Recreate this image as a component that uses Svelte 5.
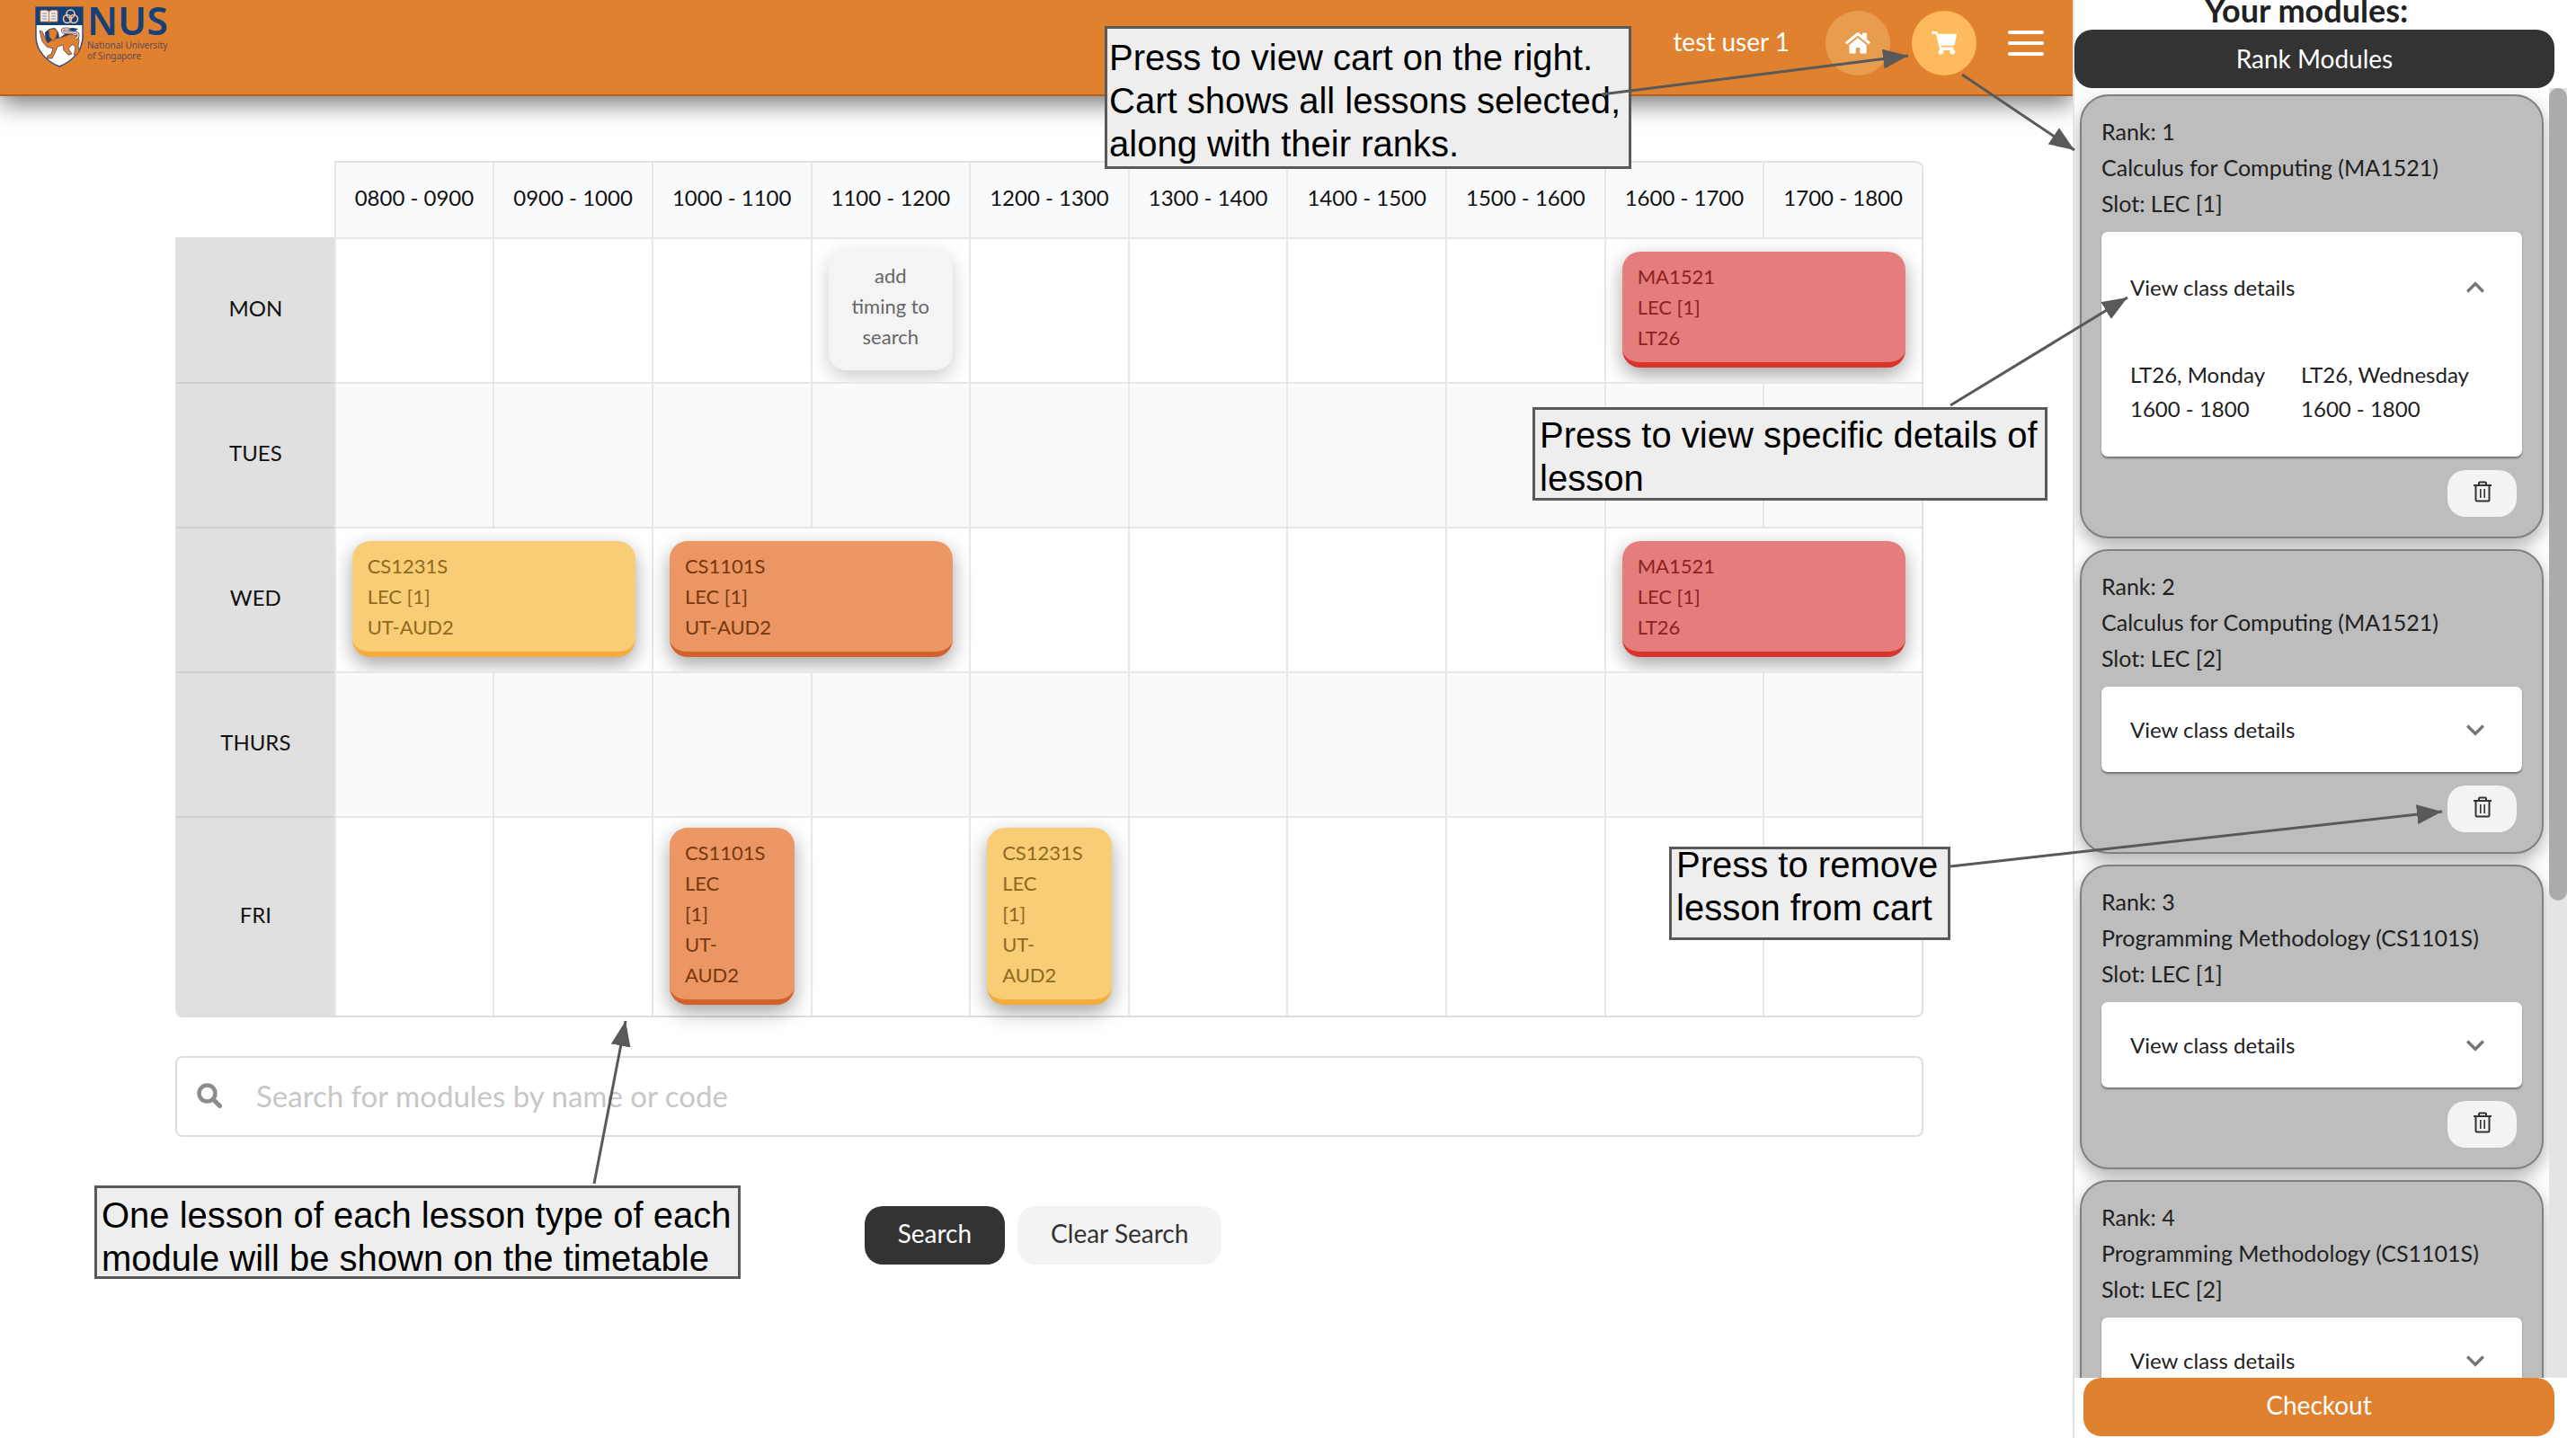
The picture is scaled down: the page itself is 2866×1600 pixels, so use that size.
<script>
  const hours = [
    '0800 - 0900', '0900 - 1000', '1000 - 1100', '1100 - 1200', '1200 - 1300',
    '1300 - 1400', '1400 - 1500', '1500 - 1600', '1600 - 1700', '1700 - 1800'
  ];

  const gap = (n) => Array.from({ length: n }, () => ({ span: 1 }));
  const lesson = (span, tone, ...lines) => ({ span, tone, lines });

  const days = [
    {
      name: 'MON',
      cells: [...gap(3), lesson(1, 'add', 'add', 'timing to', 'search'), ...gap(4), lesson(2, 'red', 'MA1521', 'LEC [1]', 'LT26')]
    },
    { name: 'TUES', cells: gap(10) },
    {
      name: 'WED',
      cells: [
        lesson(2, 'yellow', 'CS1231S', 'LEC [1]', 'UT-AUD2'),
        lesson(2, 'orange', 'CS1101S', 'LEC [1]', 'UT-AUD2'),
        ...gap(4),
        lesson(2, 'red', 'MA1521', 'LEC [1]', 'LT26')
      ]
    },
    { name: 'THURS', cells: gap(10) },
    {
      name: 'FRI',
      cells: [
        ...gap(2),
        lesson(1, 'orange', 'CS1101S', 'LEC', '[1]', 'UT-', 'AUD2'),
        ...gap(1),
        lesson(1, 'yellow', 'CS1231S', 'LEC', '[1]', 'UT-', 'AUD2'),
        ...gap(5)
      ]
    }
  ];

  let cart = $state([
    {
      rank: 1, title: 'Calculus for Computing (MA1521)', slot: 'LEC [1]', open: true,
      classes: [['LT26, Monday', '1600 - 1800'], ['LT26, Wednesday', '1600 - 1800']]
    },
    { rank: 2, title: 'Calculus for Computing (MA1521)', slot: 'LEC [2]', open: false, classes: [] },
    { rank: 3, title: 'Programming Methodology (CS1101S)', slot: 'LEC [1]', open: false, classes: [] },
    { rank: 4, title: 'Programming Methodology (CS1101S)', slot: 'LEC [2]', open: false, classes: [] }
  ]);

  let query = $state('');
</script>

<div class="page">
  <div class="workspace">
    <header>
      <a class="logo" href="#home" aria-label="National University of Singapore">
        <svg width="54" height="68" viewBox="0 0 54 68" aria-hidden="true">
          <path d="M1 1h52v33c0 16-13 28-26 33C14 62 1 50 1 34z" fill="#fff" stroke="#3a4d80" stroke-width="1.5" />
          <path d="M1 1h52v20H1z" fill="#16407a" />
          <path d="M6 5c4-1 7-1 9.500 1 2.500-2 6-2 9.500-1v12H6z" fill="#f3f1f1" stroke="#e0812f" stroke-width="1" />
          <path d="M8 8h5M8 11h5M8 14h5M18 8h5M18 11h5M18 14h5" stroke="#6d82ad" />
          <path d="M15.500 5v13" stroke="#e0812f" stroke-width="1.500" />
          <g fill="none" stroke="#f2c39a" stroke-width="1.600">
            <circle cx="39.500" cy="8.500" r="4.500" /><circle cx="36" cy="14" r="4.500" /><circle cx="43" cy="14" r="4.500" />
          </g>
          <path d="M11 29l5-4 6-1 4 5 1 6-3 5 2 3 7-4 4-6 6-1-8-2-5 3-3 3-2 9-5 2-8-6z" fill="#16407a" />
          <path d="M5 27l3 1 6 13 5-4 12-3 8-3 9 2 1 5-1 6 1 6-2 4h-4l1-3 1-5-3-4-3 3-2 2 2 3 2 3-4 1-5-5-1-6-6 2-3 7-3 6h-6l1-3 4-2 2-6-7-2-5-6z" fill="#e0812f" stroke="#5c4658" stroke-width=".8" />
          <path d="M15 26l7-1 3 4-2 6-3 4-4-5z" fill="#e0812f" stroke="#8a5138" />
          <path d="M45 36c3-1 4-4 2-6-4-3-10 1-15-1-3-2-1-4 2-4l9 1" fill="none" stroke="#5c4658" stroke-width="3.200" />
          <path d="M45 36c3-1 4-4 2-6-4-3-10 1-15-1-3-2-1-4 2-4l9 1" fill="none" stroke="#f7d7bd" stroke-width="1.600" />
          <path d="M37 26l5-2 6 1-4 3z" fill="#16407a" />
        </svg>
        <span class="logo-text">
          <strong>NUS</strong>
          <small>National University<br />of Singapore</small>
        </span>
      </a>
      <nav>
        <span class="user">test user 1</span>
        <button class="round home" aria-label="Home">
          <svg width="28" height="24" viewBox="0 0 28 24" fill="#fff" aria-hidden="true">
            <path d="M14 0a2 2 0 0 1 1.300.5L19 3.600V1.500a1 1 0 0 1 1-1h3a1 1 0 0 1 1 1v6.200l3.600 3a.8.8 0 0 1 .1 1.100l-1 1.200a.8.8 0 0 1-1.100.1L14.500 3.900a.8.8 0 0 0-1 0L2.400 13.100a.8.8 0 0 1-1.100-.1l-1-1.200a.8.8 0 0 1 .1-1.100L12.700.5A2 2 0 0 1 14 0z" />
            <path d="M14 6.300 23.600 14v8.500a1 1 0 0 1-1 1h-5.300a1 1 0 0 1-1-1v-4.700a.8.8 0 0 0-.8-.8h-3a.8.8 0 0 0-.8.8v4.700a1 1 0 0 1-1 1H5.400a1 1 0 0 1-1-1V14z" />
          </svg>
        </button>
        <button class="round cart" aria-label="Cart">
          <svg width="28" height="26" viewBox="0 0 28 26" fill="#fff" aria-hidden="true">
            <path d="M1 0h4.600c.6 0 1 .4 1.200 1l.4 1.800h19.500c.8 0 1.400.8 1.200 1.600l-2.300 10.400c-.1.600-.6 1-1.200 1H10.200l.3 1.600h13.100c.8 0 1.400.8 1.200 1.500l-.3 1.300a2.800 2.800 0 1 1-3.300.8H12.600a2.800 2.800 0 1 1-3.400-.6L5 2.800H1a1 1 0 0 1-1-1V1a1 1 0 0 1 1-1z" />
          </svg>
        </button>
        <button class="menu" aria-label="Menu"><i></i><i></i><i></i></button>
      </nav>
    </header>

    <main>
      <table>
        <thead>
          <tr>
            <td class="corner"></td>
            {#each hours as hour}<th scope="col">{hour}</th>{/each}
          </tr>
        </thead>
        <tbody>
          {#each days as day}
            <tr>
              <th scope="row">{day.name}</th>
              {#each day.cells as cell}
                <td colspan={cell.span}>
                  {#if cell.tone === 'add'}
                    <button class="lesson add">{#each cell.lines as line}<span>{line}</span>{/each}</button>
                  {:else if cell.lines}
                    <div class="lesson {cell.tone}">{#each cell.lines as line}<span>{line}</span>{/each}</div>
                  {/if}
                </td>
              {/each}
            </tr>
          {/each}
        </tbody>
      </table>

      <label class="search">
        <svg width="28" height="28" viewBox="0 0 28 28" fill="none" stroke="#8c8c8c" aria-hidden="true">
          <circle cx="11.500" cy="11.500" r="9" stroke-width="4.500" />
          <path d="M18.500 18.500l7 7" stroke-width="5" stroke-linecap="round" />
        </svg>
        <input type="text" placeholder="Search for modules by name or code" aria-label="Search for modules" bind:value={query} />
      </label>

      <div class="actions">
        <button class="btn dark">Search</button>
        <button class="btn light" onclick={() => (query = '')}>Clear Search</button>
      </div>
    </main>
  </div>

  <aside>
    <h2>Your modules:</h2>
    <button class="btn dark wide">Rank Modules</button>
    <div class="scroller">
      <div class="list">
        {#each cart as item}
          <article>
            <p>Rank: {item.rank}</p>
            <p>{item.title}</p>
            <p>Slot: {item.slot}</p>
            <section class="details" class:open={item.open}>
              <button class="summary" aria-expanded={item.open} onclick={() => (item.open = !item.open)}>
                View class details
                <svg width="40" height="40" viewBox="0 0 24 24" fill="#757575" aria-hidden="true">
                  {#if item.open}
                    <path d="M12 8l-6 6 1.410 1.410L12 10.830l4.590 4.580L18 14z" />
                  {:else}
                    <path d="M16.590 8.590L12 13.170 7.410 8.590 6 10l6 6 6-6z" />
                  {/if}
                </svg>
              </button>
              {#if item.open}
                <div class="classes">
                  {#each item.classes as [place, time]}<span>{place}<br />{time}</span>{/each}
                </div>
              {/if}
            </section>
            <button class="remove" aria-label="Remove lesson">
              <svg width="20" height="24" viewBox="0 0 20 24" fill="none" stroke="#333" stroke-width="2" aria-hidden="true">
                <path d="M0 5h20M6 4.500V2.500Q6 1.500 7 1.500h6q1 0 1 1v2M2.500 5v16q0 1.500 1.500 1.500h12q1.500 0 1.500-1.500V5" />
                <path d="M7.800 9v10M12.200 9v10" stroke-width="1.600" />
              </svg>
            </button>
          </article>
        {/each}
      </div>
      <div class="track"><div class="thumb"></div></div>
    </div>
    <button class="btn checkout">Checkout</button>
  </aside>

  <div class="note cart-note">Press to view cart on the right.<br />Cart shows all lessons selected,<br />along with their ranks.</div>
  <div class="note details-note">Press to view specific details of<br />lesson</div>
  <div class="note remove-note"><span>Press to remove<br />lesson from cart</span></div>
  <div class="note lesson-note">One lesson of each lesson type of each<br />module will be shown on the timetable</div>
  <svg class="arrows" width="2866" height="1600" viewBox="0 0 2866 1600" aria-hidden="true">
    <defs>
      <marker id="tip" viewBox="0 0 28 22" refX="28" refY="11" markerWidth="28" markerHeight="22" markerUnits="userSpaceOnUse" orient="auto">
        <path d="M0 0L28 11 0 22z" fill="#595959" />
      </marker>
    </defs>
    <g stroke="#595959" stroke-width="3">
      <path d="M1782 105L2123 62" marker-end="url(#tip)" />
      <path d="M2183 83L2308 167" marker-end="url(#tip)" />
      <path d="M2170 451L2367 331" marker-end="url(#tip)" />
      <path d="M2170 964L2717 903" marker-end="url(#tip)" />
      <path d="M661 1317L696 1136" marker-end="url(#tip)" />
    </g>
  </svg>
</div>

<style>
  :global(body) {
    margin: 0;
    background: #fff;
  }
  .page {
    position: relative;
    display: grid;
    grid-template-columns: minmax(0, 1fr) 550px;
    height: 100vh;
    box-sizing: border-box;
    padding-right: 10px;
    overflow: hidden;
    font-family: Lato, 'Open Sans', sans-serif;
    color: #212121;
  }
  button {
    font: inherit;
    color: inherit;
    border: 0;
    padding: 0;
    cursor: pointer;
  }
  header {
    display: flex;
    justify-content: space-between;
    align-items: flex-start;
    height: 105px;
    padding: 0 32px 0 39px;
    background: #e0812f;
    border-bottom: 2px solid #b0611f;
    box-shadow: 0 8px 26px rgba(0, 0, 0, 0.55);
  }
  .workspace {
    overflow: hidden;
  }
  .logo {
    display: flex;
    gap: 4px;
    padding-top: 7px;
    color: #16407a;
    text-decoration: none;
  }
  .logo-text {
    display: flex;
    flex-direction: column;
    font-family: 'Noto Sans', sans-serif;
  }
  .logo-text strong {
    font-size: 43px;
    font-weight: 600;
    line-height: 32px;
  }
  .logo-text small {
    margin-top: 5px;
    font-size: 10px;
    line-height: 12px;
    color: #5d4a56;
  }
  nav {
    display: flex;
    align-items: center;
    padding-top: 12px;
    color: #fff;
  }
  .user {
    margin-right: 40px;
    padding-bottom: 4px;
    font-size: 28px;
  }
  .round {
    display: flex;
    align-items: center;
    justify-content: center;
    width: 72px;
    height: 72px;
    margin-right: 24px;
    border-radius: 50%;
  }
  .home {
    background: #e79c4e;
  }
  .cart {
    margin-right: 35px;
    background: #ffba5d;
  }
  .menu {
    display: grid;
    gap: 8px;
    width: 40px;
    background: none;
  }
  .menu i {
    height: 4px;
    border-radius: 2px;
    background: #fff;
  }

  main {
    padding: 72px 166px 0 195px;
  }
  table {
    width: 100%;
    table-layout: fixed;
    border-collapse: separate;
    border-spacing: 0;
    border-right: 2px solid #e0e1e2;
    border-bottom: 2px solid #dcdddd;
    border-radius: 8px;
  }
  th,
  td {
    box-sizing: border-box;
    padding: 0;
    border-left: 2px solid #e6e7e7;
    font-size: 24px;
    font-weight: 400;
  }
  thead th {
    height: 85px;
    padding-bottom: 6px;
    background: #f9fafb;
    border-top: 2px solid #e0e1e2;
    color: #111;
  }
  thead th:last-child {
    border-top-right-radius: 8px;
  }
  .corner {
    border-color: transparent;
  }
  tbody td {
    height: 161px;
    padding: 10px 18px 12px;
    border-top: 2px solid #e6e7e7;
  }
  tbody tr:last-child td {
    height: 222px;
  }
  tbody th {
    padding-bottom: 6px;
    background: #e0e0e0;
    border-left-color: #e0e0e0;
    border-top: 2px solid #cfcfcf;
    color: #111;
  }
  tbody tr:first-child th {
    border-top-color: #e0e0e0;
  }
  tbody tr:last-child th {
    border-bottom-left-radius: 8px;
  }
  tbody tr:nth-child(even) td {
    background: #fafafa;
  }
  .lesson {
    display: flex;
    flex-direction: column;
    box-sizing: border-box;
    width: 100%;
    padding: 11px 17px 10px;
    border-bottom: 6px solid;
    border-radius: 20px;
    box-shadow: 0 8px 22px rgba(0, 0, 0, 0.36);
    font-size: 22px;
    line-height: 34px;
  }
  .lesson.red {
    background: #e47d7b;
    border-color: #d9342c;
  }
  .lesson.orange {
    background: #eb9663;
    border-color: #d2612b;
  }
  .lesson.yellow {
    background: #f8cd76;
    border-color: #f4ac3d;
  }
  .red span {
    color: #8c2322;
  }
  .orange span {
    color: #78380f;
  }
  .yellow span {
    color: #8f6a1e;
  }
  .lesson.add {
    align-items: center;
    padding: 13px 0 20px;
    border: 0;
    background: #f4f4f4;
    box-shadow: 0 8px 22px rgba(0, 0, 0, 0.2);
    color: #666;
  }

  .search {
    display: flex;
    align-items: center;
    gap: 38px;
    box-sizing: border-box;
    height: 90px;
    margin-top: 43px;
    padding: 0 24px 3px 22px;
    border: 2px solid #dedede;
    border-radius: 8px;
  }
  .search input {
    flex: 1;
    min-width: 0;
    padding: 0;
    border: 0;
    outline: 0;
    background: none;
    font: 33px Lato, sans-serif;
    color: #212121;
  }
  .search input::placeholder {
    color: #c7c7c7;
    opacity: 1;
  }
  .actions {
    display: flex;
    justify-content: center;
    gap: 14px;
    margin-top: 77px;
    padding-right: 14px;
  }
  .btn {
    height: 65px;
    padding: 0 37px 6px;
    border-radius: 20px;
    font-size: 28px;
    line-height: 34px;
  }
  .dark {
    background: #333;
    color: #fff;
  }
  .light {
    background: #f3f3f3;
    color: #333;
  }

  aside {
    display: flex;
    flex-direction: column;
    min-height: 0;
    height: 100vh;
    box-sizing: border-box;
    padding-bottom: 2px;
    border-left: 2px solid #e2e2e2;
    background: #fff;
  }
  h2 {
    margin: 0;
    height: 33px;
    padding-right: 32px;
    font-size: 36px;
    line-height: 22px;
    text-align: center;
  }
  .wide {
    margin-right: 14px;
    padding-bottom: 2px;
  }
  .scroller {
    display: flex;
    flex: 1;
    min-height: 0;
  }
  .list {
    flex: 1;
    overflow: hidden;
    padding: 7px 6px 0;
  }
  article {
    display: flex;
    flex-direction: column;
    padding: 19px 22px 22px;
    margin-bottom: 12px;
    border: 2px solid #808080;
    border-radius: 32px;
    background: #bdbdbd;
    box-shadow: 0 8px 20px rgba(0, 0, 0, 0.32);
    font-size: 25px;
    line-height: 40px;
  }
  p {
    margin: 0;
  }
  .details {
    margin: 12px 0 15px;
    border-radius: 7px;
    background: #fff;
    box-shadow: 0 2px 2px rgba(0, 0, 0, 0.4);
    font-size: 24px;
    line-height: 38px;
  }
  .summary {
    display: flex;
    align-items: center;
    justify-content: space-between;
    width: 100%;
    height: 95px;
    padding: 0 32px;
    background: none;
    text-align: left;
  }
  .open .summary {
    height: 124px;
  }
  .classes {
    display: flex;
    gap: 40px;
    padding: 16px 32px 34px;
  }
  .remove {
    display: flex;
    align-self: flex-end;
    justify-content: center;
    align-items: center;
    width: 77px;
    height: 52px;
    margin-right: 6px;
    padding-bottom: 4px;
    border-radius: 20px;
    background: #f3f3f3;
  }
  .track {
    width: 20px;
    background: #e4e4e4;
  }
  .thumb {
    height: 63%;
    border-radius: 10px;
    background: #ababab;
  }
  .checkout {
    margin: 0 14px 0 10px;
    background: #e0812f;
    color: #fff;
  }

  .note {
    position: absolute;
    box-sizing: border-box;
    border: 3px solid #595959;
    background: #eee;
    color: #000;
    font: 40px/48px 'Liberation Sans', Arial, sans-serif;
    white-space: nowrap;
  }
  .cart-note {
    left: 1229px;
    top: 29px;
    width: 586px;
    height: 159px;
    padding: 8px 2px;
  }
  .details-note {
    left: 1705px;
    top: 453px;
    width: 573px;
    height: 104px;
    padding: 4px 5px;
  }
  .remove-note {
    display: flex;
    align-items: flex-end;
    left: 1857px;
    top: 942px;
    width: 313px;
    height: 104px;
    padding: 0 5px 9px;
  }
  .lesson-note {
    left: 105px;
    top: 1319px;
    width: 719px;
    height: 104px;
    padding: 6px 5px;
  }
  .arrows {
    position: absolute;
    left: 0;
    top: 0;
    pointer-events: none;
  }
</style>
